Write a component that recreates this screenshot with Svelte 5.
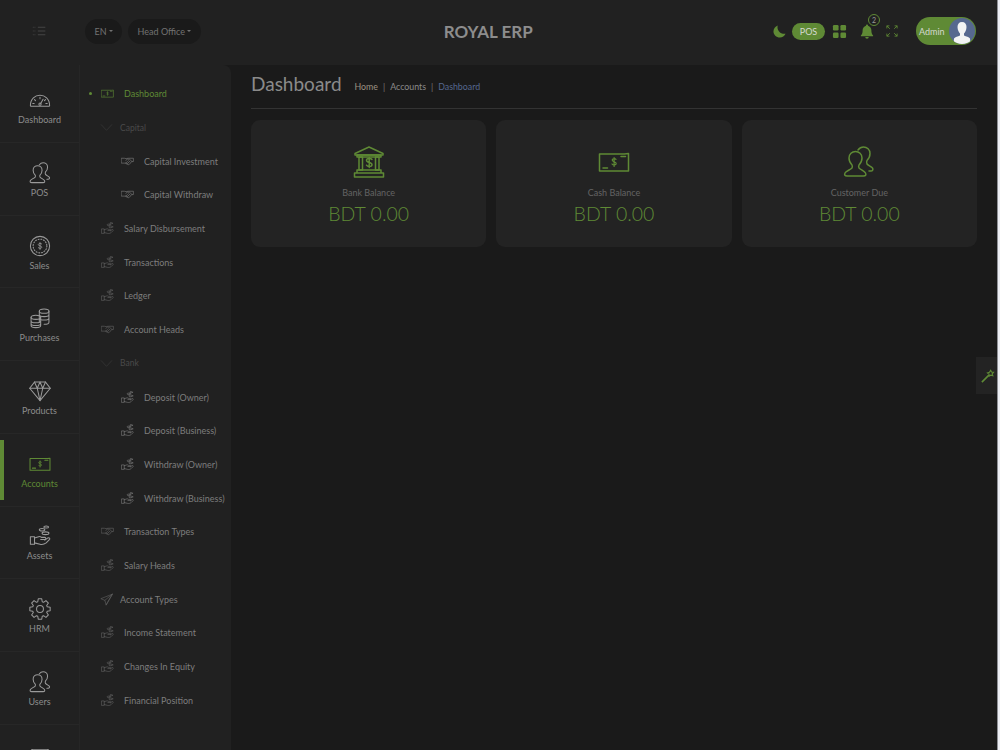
<script>
	const rail = [
		{ label: 'Dashboard', icon: 'gauge' },
		{ label: 'POS', icon: 'users' },
		{ label: 'Sales', icon: 'coin' },
		{ label: 'Purchases', icon: 'stack' },
		{ label: 'Products', icon: 'diamond' },
		{ label: 'Accounts', icon: 'cash', active: true },
		{ label: 'Assets', icon: 'handcoins' },
		{ label: 'HRM', icon: 'gear' },
		{ label: 'Users', icon: 'users' },
		{ label: '', icon: 'box' }
	];

	// kind: item, group (collapsed heading), sub (nested)
	const menu = [
		{ label: 'Dashboard', icon: 'cash', kind: 'item', active: true },
		{ label: 'Capital', icon: 'chevron', kind: 'group' },
		{ label: 'Capital Investment', icon: 'shake', kind: 'sub' },
		{ label: 'Capital Withdraw', icon: 'shake', kind: 'sub' },
		{ label: 'Salary Disbursement', icon: 'handcoins', kind: 'item' },
		{ label: 'Transactions', icon: 'handcoins', kind: 'item' },
		{ label: 'Ledger', icon: 'handcoins', kind: 'item' },
		{ label: 'Account Heads', icon: 'shake', kind: 'item' },
		{ label: 'Bank', icon: 'chevron', kind: 'group' },
		{ label: 'Deposit (Owner)', icon: 'handcoins', kind: 'sub' },
		{ label: 'Deposit (Business)', icon: 'handcoins', kind: 'sub' },
		{ label: 'Withdraw (Owner)', icon: 'handcoins', kind: 'sub' },
		{ label: 'Withdraw (Business)', icon: 'handcoins', kind: 'sub' },
		{ label: 'Transaction Types', icon: 'shake', kind: 'item' },
		{ label: 'Salary Heads', icon: 'handcoins', kind: 'item' },
		{ label: 'Account Types', icon: 'send', kind: 'flat' },
		{ label: 'Income Statement', icon: 'handcoins', kind: 'item' },
		{ label: 'Changes In Equity', icon: 'handcoins', kind: 'item' },
		{ label: 'Financial Position', icon: 'handcoins', kind: 'item' }
	];

	const cards = [
		{ label: 'Bank Balance', value: 'BDT 0.00', icon: 'bank' },
		{ label: 'Cash Balance', value: 'BDT 0.00', icon: 'cash' },
		{ label: 'Customer Due', value: 'BDT 0.00', icon: 'users' }
	];

	// 8 tooth cog outline
	function gearPath() {
		const pts = [];
		for (let i = 0; i < 8; i++) {
			const a = (i * Math.PI) / 4;
			for (const [r, off] of [[11, -0.3], [15, -0.17], [15, 0.17], [11, 0.3]]) {
				pts.push(`${(16 + r * Math.cos(a + off)).toFixed(2)} ${(16 + r * Math.sin(a + off)).toFixed(2)}`);
			}
		}
		return 'M' + pts.join('L') + 'z';
	}
	const gear = gearPath();
</script>

{#snippet icon(name)}
	<svg viewBox="0 0 32 32" fill="none" stroke="currentColor" stroke-width="1.5" stroke-linecap="round" stroke-linejoin="round">
		{#if name === 'gauge'}
			<path d="M2 24C2 14 9 9 16 9s14 5 14 15q0 1-1 1H3q-1 0-1-1z" />
			<path d="M16 12v2M8 15.500l1.500 1.500M24 15.500l-1.500 1.500M5.500 21h2M24.500 21h2M20.500 15l-3.500 6" />
			<circle cx="16" cy="22" r="1.600" />
		{:else if name === 'users'}
			<path d="M4 30c-2 0-3-1-2-3 1-2 5-3 7-5 .5-1 .5-2 0-3-2-2-3-4-3-7 0-4 3-6.500 6.500-6.500S19 8 19 12c0 3-1 5-3 7-.5 1-.5 2 0 3 2 2 5.500 3 6.500 5 1 2 0 3-2 3z" />
			<path d="M15 4c1.500-2 3.500-3 5.500-3 3.500 0 6.500 2.500 6.500 6.500 0 3-1 5-3 7-.5 1-.5 2.500 0 3.500 1 1.500 4 2.500 5.500 4 1 1.500 0 3-1.500 3h-2" />
		{:else if name === 'coin'}
			<circle cx="16" cy="16" r="14" />
			<circle cx="16" cy="16" r="10" stroke-dasharray="1.500 2.500" />
			<path d="M18.500 13c-1-1-4.500-1.200-5 .8-.4 2.500 5.400 1.400 5 4.200-.4 2-4 1.800-5 .5M16 11v10" stroke-width="1.200" />
		{:else if name === 'stack'}
			<ellipse cx="22" cy="6" rx="7" ry="3" />
			<path d="M15 6v16M29 6v16c0 1.500-3 3-7 3M15 11c0 1.500 3 3 7 3s7-1.500 7-3M15 16c0 1.500 3 3 7 3s7-1.500 7-3" />
			<ellipse cx="10" cy="15" rx="7" ry="3" />
			<path d="M3 15v12c0 1.500 3 3 7 3s7-1.500 7-3V15M3 20c0 1.500 3 3 7 3s7-1.500 7-3M3 24c0 1.500 3 3 7 3s7-1.500 7-3" />
		{:else if name === 'diamond'}
			<path d="M8 3h16l7 9-15 18L1 12z" />
			<path d="M1 12h30M8 3l4 9 4-9 4 9 4-9M12 12l4 18 4-18" />
		{:else if name === 'cash'}
			<path d="M1.500 8h25l4-.5V25h-29z" />
			<path d="M5 22h4.500M23 10.500h4.500" />
			<path d="M18 13.300c-.8-.9-3.800-.9-3.800.8 0 2.200 4 1.300 4 3.500 0 1.700-3.300 1.700-4.200.4M16.100 11.500v9" stroke-width="1.200" />
		{:else if name === 'handcoins'}
			<path d="M2 17h6v11H2zM8 19l6-2c2-.5 3 0 4 1l5 0c2 0 2 3 0 3h-6M8 26l8 2c4 1 7-.5 9-2l5-5c1-2-1-3-3-2l-4 3" />
			<ellipse cx="24" cy="12" rx="5" ry="2" />
			<ellipse cx="19" cy="7" rx="4" ry="1.800" />
			<ellipse cx="25" cy="3" rx="3.500" ry="1.500" />
		{:else if name === 'gear'}
			<path d={gear} />
			<circle cx="16" cy="16" r="5" />
		{:else if name === 'shake'}
			<path d="M1.500 8h7l4 1 5-1h13v8h-4l-6 7-3 1-5-4H1.500z" />
			<path d="M12 13l4-3 5 .5 6 5.500M11 20l3-2M14 22l3-2M19 19l-3-3M22 17l-3-3" />
		{:else if name === 'chevron'}
			<path d="M3 9l13 14L29 9" stroke-width="1.200" />
		{:else if name === 'send'}
			<path d="M30 3L2 14l10 4 3 11zM30 3L12 18M30 3L15 29" />
		{:else if name === 'box'}
			<path d="M3 3q0-2.500 3-2.500h20q3 0 3 2.500v8H3zM5 11v18h22V11M12 16h8" />
		{:else if name === 'bank'}
			<path d="M16 1L2 7.500v1.500h28V7.500z" />
			<path d="M4 9h24v2H4zM4 24h24v3H4zM1.500 27h29v4h-29z" />
			<path d="M6 11h3.500v13H6zM22.500 11H26v13h-3.500z" />
			<path d="M19 13.500c-1-1.500-5.500-1.500-5.500.8 0 3 5.500 1.500 5.500 4.400 0 2.200-4.500 2.200-5.500.5M16.200 11.500v10" />
		{/if}
	</svg>
{/snippet}

<div class="page">
	<header class="topbar">
		<div class="brand-slot">
			<svg class="toggler" viewBox="0 0 16 12" fill="none" stroke="currentColor" stroke-width="1">
				<path d="M0 1.500h3M0 6h3M0 10.500h3" stroke-dasharray="1 1" />
				<path d="M6 1.500h9M6 6h9M6 10.500h9" />
			</svg>
		</div>
		<div class="pills">
			<button class="pill" type="button">EN<i class="caret"></i></button>
			<button class="pill" type="button">Head Office<i class="caret"></i></button>
		</div>
		<div class="app-name">ROYAL ERP</div>
		<div class="tools">
			<svg class="moon" viewBox="0 0 14 14"><path d="M5 .5C4 5.500 7.500 10 13.500 9.500 12.500 12 10 13.500 7.500 13.500 3.500 13.500.5 10.500.5 7 .5 4 2.500 1.500 5 .5z" fill="currentColor" /></svg>
			<span class="pos">POS</span>
			<svg class="apps" viewBox="0 0 16 16" fill="currentColor">
				<rect x="1" y="1" width="6" height="6" rx="1.300" />
				<rect x="9" y="1" width="6" height="6" rx="1.300" />
				<rect x="1" y="9" width="6" height="6" rx="1.300" />
				<rect x="9" y="9" width="6" height="6" rx="1.300" />
			</svg>
			<span class="bell-wrap">
				<svg class="bell" viewBox="0 0 16 18" fill="currentColor">
					<path d="M8 1a1.200 1.200 0 0 1 1.200 1.300C11.500 3 13 5 13 7.500c0 3 .5 4.500 2 6v.8H1v-.8c1.500-1.500 2-3 2-6C3 5 4.500 3 6.800 2.300A1.200 1.200 0 0 1 8 1z" />
					<path d="M6 15.300h4a2 2 0 0 1-4 0z" />
				</svg>
				<span class="badge">2</span>
			</span>
			<svg class="expand" viewBox="0 0 14 14" fill="none" stroke="currentColor" stroke-width="1">
				<path d="M1 4V1h3M1 1l3.500 3.500M13 4V1h-3M13 1L9.500 4.500M1 10v3h3M1 13l3.500-3.500M13 10v3h-3M13 13L9.500 9.500" />
			</svg>
			<div class="user">
				<span>Admin</span>
				<span class="avatar">
					<svg viewBox="0 0 26 26">
						<path d="M13 4c3 0 4.500 2 4.500 5 0 3-1.500 5.500-2.500 6.500v2c2 1 5 1.500 6 3l.5 5.500h-17l.5-5.500c1-1.500 4-2 6-3v-2C10 14.500 8.500 12 8.500 9c0-3 1.500-5 4.500-5z" fill="#f2f3f4" />
					</svg>
				</span>
			</div>
		</div>
	</header>

	<div class="body">
		<nav class="rail">
			{#each rail as item}
				<a class="rail-item" class:active={item.active} href="#/">
					<span class="rail-icon">{@render icon(item.icon)}</span>
					<span>{item.label}</span>
				</a>
			{/each}
		</nav>

		<aside class="submenu">
			{#each menu as row}
				<a class="row {row.kind}" class:active={row.active} href="#/">
					{#if row.active}<i class="dot"></i>{/if}
					<span class="row-icon">{@render icon(row.icon)}</span>
					<span>{row.label}</span>
				</a>
			{/each}
		</aside>

		<main class="content">
			<div class="heading">
				<h1>Dashboard</h1>
				<ol class="crumbs">
					<li class="home">Home</li>
					<li>Accounts</li>
					<li class="current">Dashboard</li>
				</ol>
			</div>
			<section class="cards">
				{#each cards as card}
					<article class="card">
						<span class="card-icon">{@render icon(card.icon)}</span>
						<span class="card-label">{card.label}</span>
						<strong>{card.value}</strong>
					</article>
				{/each}
			</section>
		</main>

		<button class="wand" type="button" aria-label="Customizer">
			<svg viewBox="0 0 16 16" fill="none" stroke="currentColor" stroke-width="1.300">
				<path d="M1 15l8-8" stroke-width="1.800" />
				<path d="M11 1.500l1 2 2.300.2-1.500 1.800.7 2.200-2.300-.7-1.900 1.200-.1-2.400-1.800-1.400 2.200-.7z" />
			</svg>
		</button>
	</div>
</div>

<style>
	:global(body) {
		margin: 0;
		background: #eceef4;
		overflow: hidden;
	}

	.page {
		width: 997px;
		height: 750px;
		overflow: hidden;
		display: flex;
		flex-direction: column;
		font-family: Lato, 'Open Sans', sans-serif;
		color: #8f8f8f;
		background: #1a1a1a;
		box-shadow: 1px 0 0 #8e9096;
	}

	.topbar {
		flex: 0 0 65px;
		display: flex;
		align-items: center;
		position: relative;
		background: #212121;
		padding-bottom: 3px;
		box-sizing: border-box;
	}

	.brand-slot {
		width: 79px;
		display: flex;
		justify-content: center;
	}

	.toggler {
		width: 15px;
		height: 10px;
		color: #4c4c4c;
	}

	.pills {
		display: flex;
		gap: 6px;
		margin-left: 6px;
	}

	.pill {
		height: 25px;
		padding: 0 9.500px;
		border: 0;
		border-radius: 13px;
		background: #1a1a1a;
		color: #727272;
		font: 9px Lato, sans-serif;
		display: flex;
		align-items: center;
		gap: 2px;
	}

	.caret {
		border: 2.500px solid transparent;
		border-top-color: currentColor;
		border-bottom: 0;
	}

	.app-name {
		flex: 1;
		padding-left: 3px;
		text-align: center;
		font-size: 17px;
		font-weight: 700;
		color: #8d8d8d;
	}

	.tools {
		display: flex;
		align-items: center;
		color: #5f8a35;
		padding-right: 21px;
	}

	.moon {
		width: 13px;
		height: 13px;
	}

	.pos {
		margin-left: 6px;
		width: 33px;
		height: 17px;
		border-radius: 9px;
		background: #5f8a35;
		color: #d5d9d0;
		font-size: 9px;
		line-height: 17px;
		text-align: center;
	}

	.apps {
		margin-left: 7px;
		width: 15px;
		height: 15px;
	}

	.bell-wrap {
		margin-left: 13px;
		position: relative;
		display: flex;
	}

	.bell {
		width: 14px;
		height: 17px;
	}

	.badge {
		position: absolute;
		top: -9px;
		left: 8px;
		width: 10px;
		height: 10px;
		border: 1px solid #5f8a35;
		border-radius: 50%;
		background: #212121;
		color: #9a9a9a;
		font-size: 7px;
		line-height: 10px;
		text-align: center;
	}

	.expand {
		margin-left: 12px;
		width: 12px;
		height: 12px;
	}

	.user {
		margin-left: 18px;
		width: 60px;
		height: 28px;
		border-radius: 14px;
		background: #5f8a35;
		color: #d5d9d0;
		font-size: 9px;
		display: flex;
		align-items: center;
		justify-content: space-between;
		padding-left: 3px;
		box-sizing: border-box;
	}

	.avatar {
		width: 26px;
		height: 26px;
		border-radius: 50%;
		overflow: hidden;
		background: #56688f;
		margin-right: 1px;
		display: block;
	}

	.avatar svg {
		display: block;
	}

	.body {
		flex: 1;
		min-height: 0;
		display: flex;
		position: relative;
	}

	.rail {
		width: 80px;
		flex: none;
		background: #212121;
		border-right: 1px solid #262626;
		box-sizing: border-box;
		padding-top: 5.400px;
	}

	.rail-item {
		height: 72.700px;
		flex: none;
		box-sizing: border-box;
		border-bottom: 1px solid #272727;
		display: flex;
		flex-direction: column;
		align-items: center;
		justify-content: center;
		gap: 3px;
		color: #8c8c8c;
		font-size: 9px;
		text-decoration: none;
		position: relative;
		padding-top: 2px;
	}

	.rail-icon {
		width: 22px;
		height: 22px;
		flex: none;
		color: #9a9a9a;
	}

	.rail-icon svg,
	.row-icon svg,
	.card-icon svg {
		display: block;
		width: 100%;
		height: 100%;
	}

	.rail-item.active,
	.rail-item.active .rail-icon {
		color: #5f8a35;
	}

	.rail-item.active::before {
		content: '';
		position: absolute;
		left: 0;
		top: 6px;
		bottom: 6px;
		width: 4px;
		background: #5f8a35;
	}

	.submenu {
		width: 151px;
		flex: none;
		background: #212121;
		border-top-right-radius: 8px;
		padding-top: 12px;
		box-sizing: border-box;
	}

	.row {
		height: 33.700px;
		display: flex;
		align-items: center;
		position: relative;
		padding-left: 21px;
		gap: 10px;
		color: #7d7d7d;
		font-size: 9px;
		text-decoration: none;
		white-space: nowrap;
	}

	.row-icon {
		width: 13px;
		height: 13px;
		flex: none;
		color: #626262;
	}

	.row.sub {
		padding-left: 41px;
	}

	.row.sub .row-icon {
		color: #7d7d7d;
	}

	.row.group,
	.row.flat {
		padding-left: 20px;
		gap: 7px;
	}

	.row.group {
		color: #4a4a4a;
		font-size: 8.500px;
	}

	.row.group .row-icon {
		color: #454545;
	}

	.row.active,
	.row.active .row-icon {
		color: #5f8a35;
	}

	.dot {
		position: absolute;
		left: 9px;
		width: 3px;
		height: 3px;
		border-radius: 50%;
		background: #5f8a35;
	}

	.content {
		flex: 1;
		min-width: 0;
		padding: 0 20px;
	}

	.heading {
		height: 43px;
		display: flex;
		align-items: center;
		gap: 13px;
		border-bottom: 1px solid #333;
	}

	h1 {
		margin: 0 0 7px;
		font-size: 19px;
		font-weight: 400;
		color: #8a8a8a;
	}

	.crumbs {
		margin: 0;
		padding: 0;
		list-style: none;
		display: flex;
		font-size: 8.800px;
		color: #8c8c8c;
	}

	.crumbs li + li::before {
		content: '|';
		margin: 0 5px;
		color: #777;
	}

	.crumbs .home {
		color: #9c9282;
	}

	.crumbs .current {
		color: #56688f;
	}

	.cards {
		margin-top: 11px;
		display: grid;
		grid-template-columns: repeat(3, 1fr);
		gap: 10px;
	}

	.card {
		height: 127px;
		border-radius: 9px;
		background: #232323;
		display: flex;
		flex-direction: column;
		align-items: center;
		padding-top: 26px;
		box-sizing: border-box;
	}

	.card-icon {
		width: 32px;
		height: 32px;
		color: #5f8a35;
	}

	.card-label {
		margin-top: 9px;
		font-size: 9px;
		color: #636363;
	}

	.card strong {
		margin-top: 4px;
		font-size: 19.500px;
		font-weight: 300;
		color: #5f8a35;
	}

	.wand {
		position: absolute;
		right: 0;
		top: 292px;
		width: 21px;
		height: 37px;
		padding: 0 0 0 5px;
		border: 0;
		background: #232323;
		color: #5f8a35;
	}

	.wand svg {
		display: block;
		width: 14px;
		height: 14px;
	}
</style>
